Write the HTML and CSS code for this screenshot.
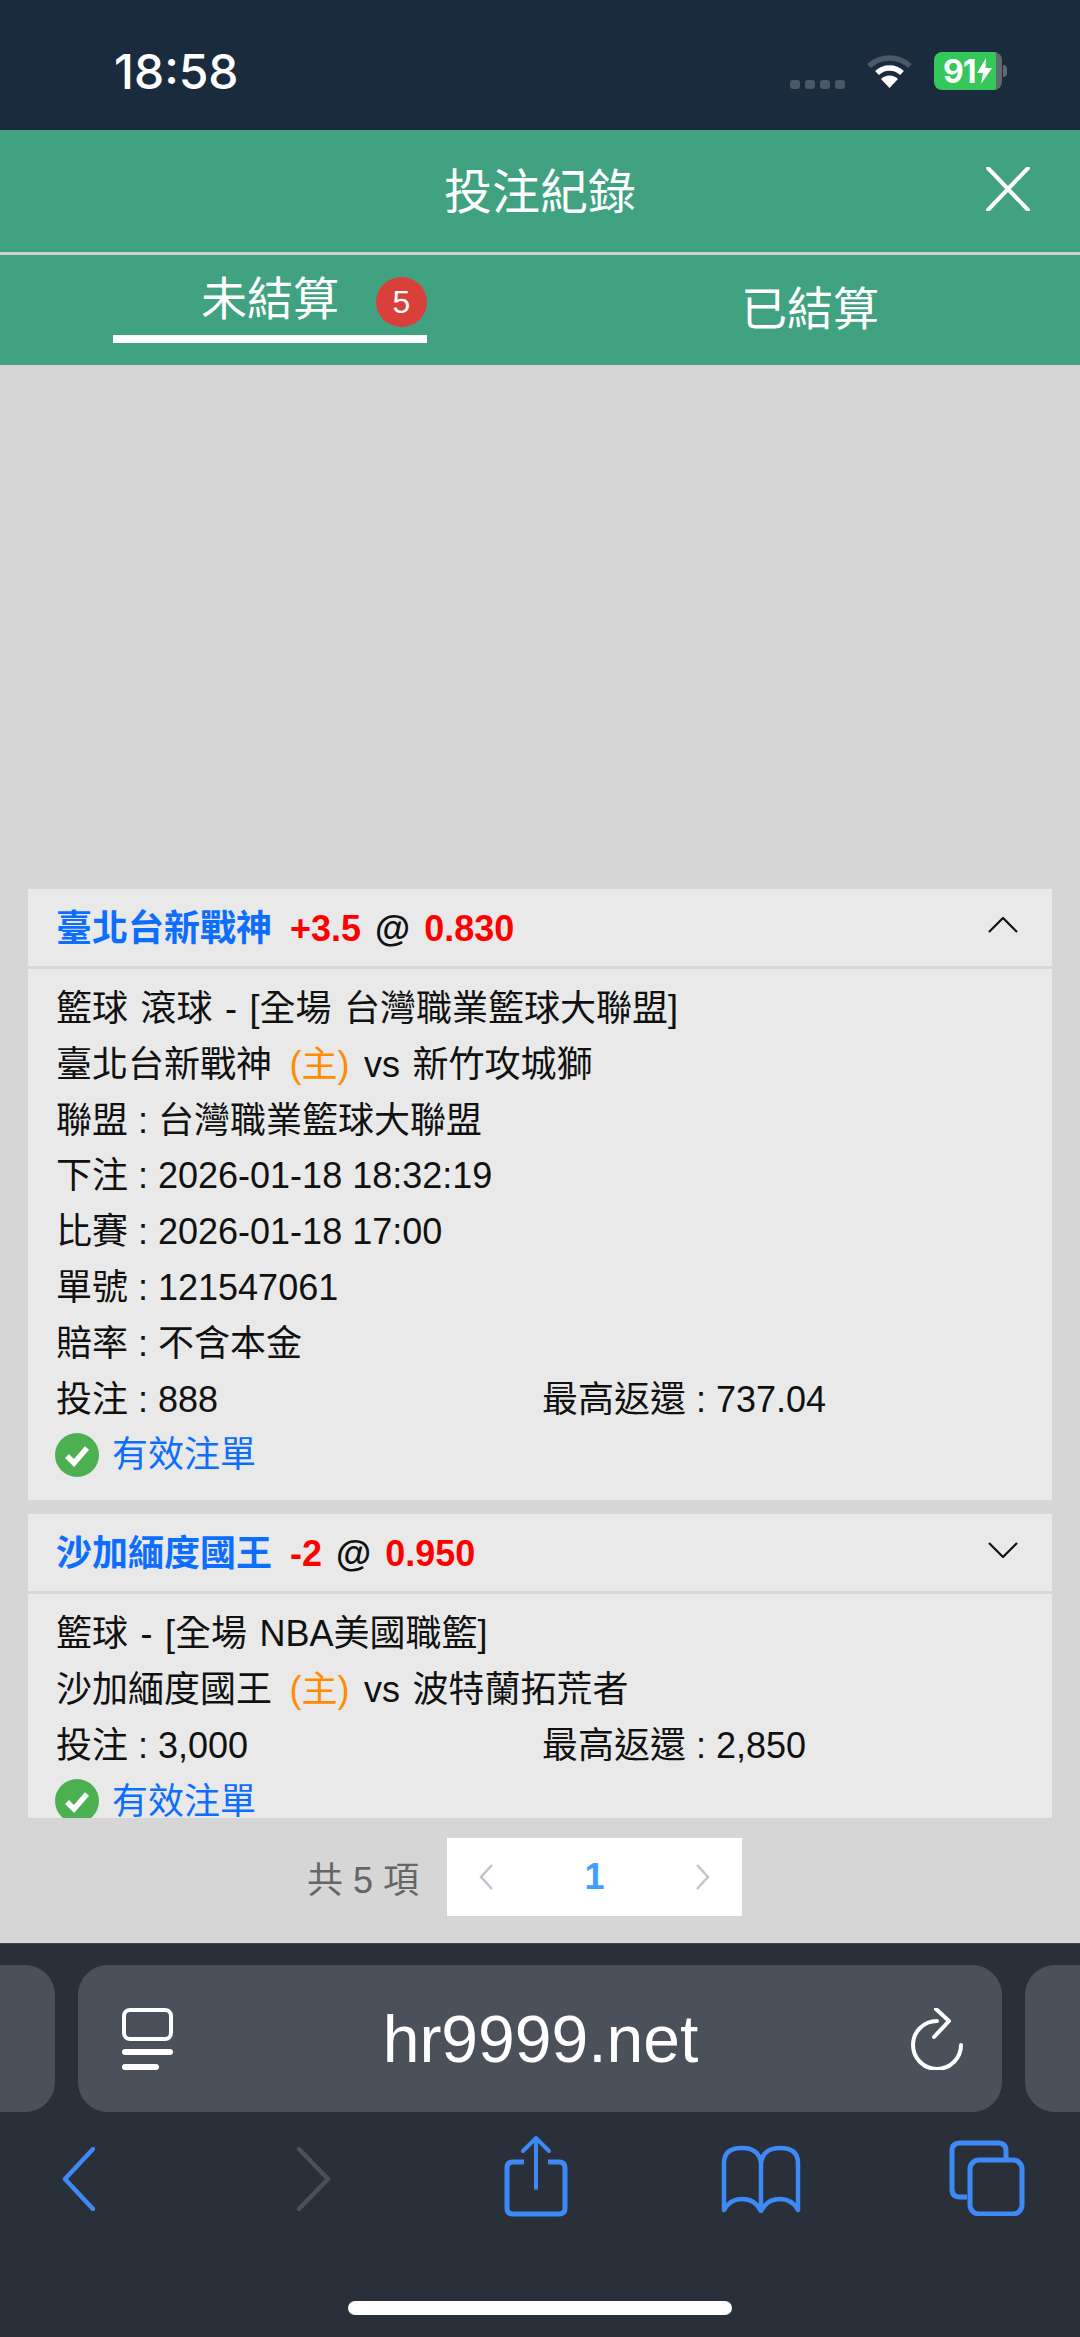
FILE: index.html
```html
<!DOCTYPE html>
<html lang="zh-Hant">
<head>
    <meta charset="UTF-8">
    <title>投注紀錄</title>
    <link rel="stylesheet" href="styles.css">
</head>
<body>
    <div class="page">
        <!-- barra de estado -->
        <div class="status-bar">
            <span class="clock">18:58</span>
            <div class="status-icons">
                <div class="signal"><i></i><i></i><i></i><i></i></div>
                <svg class="wifi" width="47" height="34" viewBox="0 0 47 34">
                    <path d="M3 12 A30 30 0 0 1 44 12" fill="none" stroke="#4b5865" stroke-width="5.5"/>
                    <path d="M11 19 A18 18 0 0 1 36 19" fill="none" stroke="#fff" stroke-width="5.5"/>
                    <path d="M23.500 34 L15 25 A12 12 0 0 1 32 25 Z" fill="#fff"/>
                </svg>
                <div class="battery">
                    <div class="battery-fill">
                        <span>91</span>
                        <svg width="15" height="28" viewBox="0 0 15 26"><path d="M9 0 L0 15 H6 L4 26 L15 10 H8.500 Z" fill="#fff"/></svg>
                    </div>
                    <div class="battery-end"></div>
                </div>
                <div class="battery-nub"></div>
            </div>
        </div>

        <div class="title-bar">
            <h1>投注紀錄</h1>
            <svg class="close-icon" width="44" height="44" viewBox="0 0 44 44">
                <path d="M2 1 L42 43 M42 1 L2 43" stroke="#fff" stroke-width="4" stroke-linecap="round"/>
            </svg>
        </div>

        <div class="tabs">
            <div class="tab tab-active">
                <span class="tab-label">未結算</span>
                <span class="badge">5</span>
            </div>
            <div class="tab tab-other">已結算</div>
        </div>

        <div class="content">
            <div class="list">
                <div class="card">
                    <div class="card-head">
                        <div class="card-title"><span class="team">臺北台新戰神</span> <span class="odds">+3.5</span> @ <span class="odds">0.830</span></div>
                        <svg class="chevron" width="30" height="16" viewBox="0 0 30 16"><path d="M1 15 L15 1 L29 15" fill="none" stroke="#111" stroke-width="2.2"/></svg>
                    </div>
                    <div class="card-body">
                        <p class="wide">籃球 滾球 - [全場 台灣職業籃球大聯盟]</p>
                        <p class="wide">臺北台新戰神 <span class="home">(主)</span> vs 新竹攻城獅</p>
                        <p>聯盟 : 台灣職業籃球大聯盟</p>
                        <p>下注 : 2026-01-18 18:32:19</p>
                        <p>比賽 : 2026-01-18 17:00</p>
                        <p>單號 : 121547061</p>
                        <p>賠率 : 不含本金</p>
                        <p class="two-col"><span>投注 : 888</span><span>最高返還 : 737.04</span></p>
                        <p class="valid">
                            <svg width="44" height="44" viewBox="0 0 44 44"><circle cx="22" cy="22" r="22" fill="#4caf50"/><path d="M12 23 L19 30 L32 15" fill="none" stroke="#fff" stroke-width="5.500"/></svg>
                            <span>有效注單</span>
                        </p>
                    </div>
                </div>

                <div class="card">
                    <div class="card-head">
                        <div class="card-title"><span class="team">沙加緬度國王</span> <span class="odds">-2</span> @ <span class="odds">0.950</span></div>
                        <svg class="chevron" width="30" height="16" viewBox="0 0 30 16"><path d="M1 1 L15 15 L29 1" fill="none" stroke="#111" stroke-width="2.2"/></svg>
                    </div>
                    <div class="card-body">
                        <p class="wide">籃球 - [全場 NBA美國職籃]</p>
                        <p class="wide">沙加緬度國王 <span class="home">(主)</span> vs 波特蘭拓荒者</p>
                        <p class="two-col"><span>投注 : 3,000</span><span>最高返還 : 2,850</span></p>
                        <p class="valid">
                            <svg width="44" height="44" viewBox="0 0 44 44"><circle cx="22" cy="22" r="22" fill="#4caf50"/><path d="M12 23 L19 30 L32 15" fill="none" stroke="#fff" stroke-width="5.500"/></svg>
                            <span>有效注單</span>
                        </p>
                    </div>
                </div>
            </div>

            <div class="pager">
                <span class="pager-total">共 5 項</span>
                <div class="pager-box">
                    <svg width="16" height="28" viewBox="0 0 16 28"><path d="M14 2 L3 14 L14 26" fill="none" stroke="#c0c4cc" stroke-width="2.500"/></svg>
                    <span class="pager-num">1</span>
                    <svg width="16" height="28" viewBox="0 0 16 28"><path d="M2 2 L13 14 L2 26" fill="none" stroke="#c0c4cc" stroke-width="2.500"/></svg>
                </div>
            </div>
        </div>

        <!-- barra de safari -->
        <div class="browser">
            <div class="url-row">
                <div class="url-side url-left"></div>
                <div class="url-pill">
                    <svg width="52" height="62" viewBox="0 0 52 62" fill="none" stroke="#fff">
                        <rect x="2" y="2" width="47" height="29" rx="6" stroke-width="4"/>
                        <path d="M3 44 H48" stroke-width="6" stroke-linecap="round"/>
                        <path d="M3 59 H34" stroke-width="6" stroke-linecap="round"/>
                    </svg>
                    <span class="url-text">hr9999.net</span>
                    <svg width="52" height="62" viewBox="0 0 52 62" fill="none" stroke="#fff" stroke-width="4" stroke-linecap="round" stroke-linejoin="round">
                        <path d="M26 13 A24 24 0 1 0 50 37"/>
                        <path d="M25 1 L38 13 L23 29"/>
                    </svg>
                </div>
                <div class="url-side url-right"></div>
            </div>
            <div class="toolbar">
                <svg class="tool-back" width="33" height="64" viewBox="0 0 33 64" fill="none" stroke="#3d8af7" stroke-width="4.500" stroke-linecap="round" stroke-linejoin="round"><path d="M31 2 L3 32 L31 62"/></svg>
                <svg class="tool-forward" width="35" height="64" viewBox="0 0 35 64" fill="none" stroke="#4a4f58" stroke-width="4.500" stroke-linecap="round" stroke-linejoin="round"><path d="M3 2 L32 32 L3 62"/></svg>
                <svg class="tool-share" width="64" height="82" viewBox="0 0 64 82" fill="none" stroke="#3d8af7" stroke-linejoin="round">
                    <path d="M20 27 H9 Q3 27 3 33 V73 Q3 79 9 79 H55 Q61 79 61 73 V33 Q61 27 55 27 H44" stroke-width="5"/>
                    <path d="M32 53 V3 M19 16 L32 3 L45 16" stroke-width="4" stroke-linecap="round"/>
                </svg>
                <svg class="tool-book" width="80" height="68" viewBox="0 0 80 68" fill="none" stroke="#3d8af7" stroke-width="4.500" stroke-linejoin="round">
                    <path d="M40 18 Q38 3 21 3 Q3 3 3 18 V65 Q9 54 21 54 Q34 54 40 66 Q46 54 59 54 Q71 54 77 65 V18 Q77 3 59 3 Q42 3 40 18 Z M40 18 V66"/>
                </svg>
                <svg class="tool-tabs" width="76" height="76" viewBox="0 0 76 76" fill="none" stroke="#3d8af7" stroke-width="5">
                    <path d="M57 18 V11 Q57 3 49 3 H11 Q3 3 3 11 V49 Q3 57 11 57 H18"/>
                    <rect x="21" y="20" width="52" height="54" rx="9"/>
                </svg>
            </div>
            <div class="home-indicator"></div>
        </div>
    </div>
</body>
</html>
```

FILE: styles.css
```css
* {
    box-sizing: border-box;
}

body {
    margin: 0;
    font-family: "Liberation Sans", "Noto Sans CJK TC", sans-serif;
    color: #111;
}

.page {
    width: 1080px;
    height: 2337px;
    display: flex;
    flex-direction: column;
    overflow: hidden;
    background-color: #d6d6d6;
}

/* status bar */
.status-bar {
    height: 130px;
    flex-shrink: 0;
    background-color: #1a2b3d;
    display: flex;
    justify-content: space-between;
    padding: 0 73px 0 114px;
    color: white;
}

.clock {
    font-family: "Inter", sans-serif;
    font-size: 48px;
    font-weight: 500;
    line-height: 44px;
    margin-top: 50px;
}

.status-icons {
    display: flex;
    align-items: flex-start;
    padding-top: 52px;
}

.signal {
    display: flex;
    gap: 5px;
    margin-top: 28px;
    margin-right: 21px;
}

.signal i {
    width: 10px;
    height: 9px;
    border-radius: 3px;
    background-color: #4b5865;
}

.wifi {
    margin-top: 2px;
    margin-right: 21px;
}

.battery {
    width: 68px;
    height: 38px;
    display: flex;
    border-radius: 8px;
    overflow: hidden;
}

.battery-fill {
    flex: 1;
    background-color: #34c759;
    display: flex;
    align-items: center;
    gap: 1px;
    padding-left: 9px;
    font-family: "Inter", sans-serif;
    font-size: 32px;
    font-weight: 700;
    letter-spacing: -1px;
}

.battery-end {
    width: 6px;
    background-color: #5f6a70;
}

.battery-nub {
    width: 4px;
    height: 12px;
    margin-top: 13px;
    margin-left: 1px;
    border-radius: 0 6px 6px 0;
    background-color: #5f6a70;
}

/* header */
.title-bar {
    height: 125px;
    flex-shrink: 0;
    background-color: #40a280;
    border-bottom: 3px solid #cdd2cf;
    padding-bottom: 6px;
    display: flex;
    justify-content: center;
    align-items: center;
    position: relative;
}

.title-bar h1 {
    margin: 0;
    font-size: 48px;
    font-weight: 400;
    color: white;
}

.close-icon {
    position: absolute;
    right: 50px;
    top: 37px;
}

.tabs {
    height: 110px;
    flex-shrink: 0;
    background-color: #40a280;
    color: white;
    font-size: 46px;
    display: flex;
    white-space: nowrap;
}

.tab-active {
    width: 314px;
    height: 88px;
    margin-left: 113px;
    border-bottom: 8px solid white;
    padding-left: 88px;
    display: flex;
    align-items: flex-start;
    padding-top: 13px;
    line-height: 62px;
}

.tab-label {
    flex-shrink: 0;
}

.badge {
    width: 51px;
    height: 50px;
    flex-shrink: 0;
    margin-left: 37px;
    margin-top: 9px;
    border-radius: 50%;
    background-color: #d9403a;
    font-size: 32px;
    line-height: 50px;
    text-align: center;
}

.tab-other {
    margin-left: 314px;
    line-height: 62px;
    padding-top: 23px;
}

/* list */
.content {
    flex: 1;
    display: flex;
    flex-direction: column;
}

.list {
    height: 1453px;
    padding: 524px 28px 0;
    overflow: hidden;
    flex-shrink: 0;
}

.card {
    margin-bottom: 14px;
    background-color: #e9e9e9;
}

.card-head {
    height: 80px;
    border-bottom: 3px solid #d6d6d6;
    padding: 0 34px 5px 28px;
    display: flex;
    justify-content: space-between;
    align-items: center;
}

.card-title {
    font-size: 36px;
    font-weight: 700;
    word-spacing: 4px;
}

.team {
    color: #0d6efd;
    margin-right: 4px;
}

.odds {
    color: #f00;
}

.card-body {
    padding: 12px 29px 17px 28px;
    font-size: 36px;
}

.card-body p {
    margin: 0;
    height: 55.8px;
    line-height: 55.8px;
    white-space: nowrap;
}

.card-body .wide {
    word-spacing: 2.5px;
}

.home {
    color: #ff8c00;
    margin: 0 2px 0 5px;
}

.two-col {
    display: grid;
    grid-template-columns: 486px 1fr;
}

.card-body .valid {
    display: flex;
    align-items: center;
    gap: 13px;
    color: #0d6efd;
    margin-left: -1px;
}

/* pager */
.pager {
    display: flex;
    align-items: center;
    margin-top: 20px;
    padding-left: 307px;
}

.pager-total {
    width: 140px;
    font-size: 36px;
    color: #666;
}

.pager-box {
    width: 295px;
    height: 78px;
    background-color: white;
    display: flex;
    justify-content: space-between;
    align-items: center;
    padding: 0 31px 0 31px;
}

.pager-num {
    font-size: 36px;
    font-weight: 700;
    color: #409eff;
}

/* browser bar */
.browser {
    height: 394px;
    flex-shrink: 0;
    background-color: #29303a;
    border-top: 1px solid #444;
    padding-top: 21px;
}

.url-row {
    display: flex;
    justify-content: space-between;
    height: 147px;
}

.url-side {
    width: 55px;
    background-color: #4a515b;
}

.url-left {
    border-radius: 0 30px 30px 0;
}

.url-right {
    border-radius: 30px 0 0 30px;
}

.url-pill {
    width: 924px;
    background-color: #4a515b;
    border-radius: 30px;
    display: flex;
    justify-content: space-between;
    align-items: center;
    padding: 0 39px 0 44px;
    color: white;
}

.url-text {
    font-size: 66px;
    line-height: 70px;
    margin-right: 4px;
}

.toolbar {
    display: flex;
    align-items: flex-start;
    margin-top: 23px;
    height: 166px;
}

.tool-back {
    margin-left: 62px;
    margin-top: 12px;
}

.tool-forward {
    margin-left: 201px;
    margin-top: 12px;
}

.tool-share {
    margin-left: 173px;
}

.tool-book {
    margin-left: 153px;
    margin-top: 10px;
}

.tool-tabs {
    margin-left: 148px;
    margin-top: 5px;
}

.home-indicator {
    width: 384px;
    height: 14px;
    margin: 0 auto;
    border-radius: 7px;
    background-color: white;
}
```
